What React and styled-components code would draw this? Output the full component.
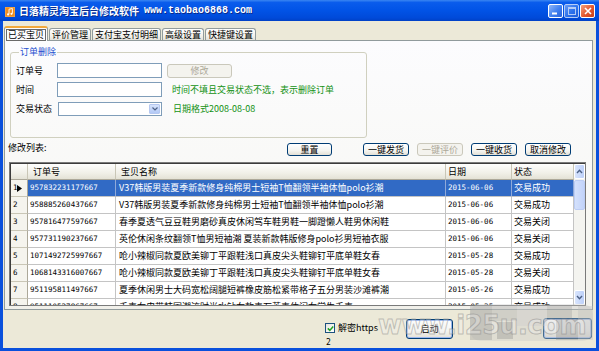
import React from 'react';
import styled, { createGlobalStyle } from 'styled-components';

const GlobalStyle = createGlobalStyle`
  html, body { margin: 0; padding: 0; background: #fff; }
  body { font-family: "Noto Sans CJK SC", "Liberation Sans", sans-serif; font-size: 9px; color: #000; }
  * { box-sizing: border-box; }
`;

const Window = styled.div`
  position: relative;
  width: 599px;
  height: 351px;
  display: flex;
  flex-direction: column;
  background: #0a50dc;
  overflow: hidden;
`;

const TitleBar = styled.div`
  height: 21px;
  flex: none;
  display: flex;
  align-items: center;
  padding: 1px 4px 0 5px;
  background: linear-gradient(#3a86f2 0%, #0a5cec 12%, #0153e6 50%, #004ad9 85%, #0040c6 100%);
  color: #fff;
`;

const AppIcon = styled.svg`
  width: 10px;
  height: 10px;
  margin-top: 1px;
  flex: none;
`;

const Title = styled.span`
  margin-left: 4px;
  font-size: 10px;
  font-weight: bold;
  line-height: 12px;
  text-shadow: 1px 1px 0 #0a2a8a;
`;

const TitleUrl = styled.span`
  margin-left: 5px;
  font-family: "Liberation Mono", monospace;
  font-size: 10px;
  font-weight: bold;
  line-height: 12px;
  text-shadow: 1px 1px 0 #0a2a8a;
`;

const Controls = styled.div`
  margin-left: auto;
  display: flex;
  gap: 1px;
`;

const CtrlBtn = styled.div`
  width: 15px;
  height: 14px;
  border: 1px solid #fff;
  border-radius: 2px;
  display: flex;
  align-items: center;
  justify-content: center;
  background: ${p => p.$close
    ? 'linear-gradient(135deg, #f4a07c, #e3572e 55%, #c8401c)'
    : 'linear-gradient(135deg, #8fb6f8, #3f7ff0 55%, #2a62d8)'};
  opacity: ${p => (p.$faded ? 0.7 : 1)};
`;

const Client = styled.div`
  flex: 1;
  margin: 0 3px 4px 3px;
  padding: 5px 3px 0 1px;
  background: #ece9d8;
  display: flex;
  flex-direction: column;
`;

const TabStrip = styled.div`
  height: 15px;
  flex: none;
  display: flex;
  align-items: flex-end;
  margin-bottom: -1px;
  position: relative;
  z-index: 2;
`;

const Tab = styled.div`
  height: ${p => (p.$active ? 15 : 12)}px;
  margin-bottom: ${p => (p.$active ? 0 : 1)}px;
  margin-right: 1px;
  padding: 0 2px;
  border: 1px solid #919b9c;
  border-bottom: none;
  border-top: ${p => (p.$active ? '2px solid #f3a93a' : '1px solid #919b9c')};
  border-radius: 3px 3px 0 0;
  background: ${p => (p.$active ? '#fcfcfe' : 'linear-gradient(#ffffff, #f3f2ec 60%, #e2e1d9)')};
  font-size: 9px;
  line-height: 11px;
  white-space: nowrap;
  display: flex;
  align-items: center;
`;

const FocusText = styled.span`
  outline: 1px solid #6a6a6a;
  padding: 0 1px;
  line-height: 10px;
`;

const TabPanel = styled.div`
  height: 270px;
  flex: none;
  border: 1px solid #919b9c;
  background: linear-gradient(#fcfcfe, #f7f7f3 70%, #f1f0ea);
  display: flex;
  flex-direction: column;
`;

const GroupBox = styled.fieldset`
  width: 357px;
  margin: 5px 0 0 5px;
  padding: 0 6px 21px 5px;
  border: 1px solid #d0d0bf;
  border-radius: 3px;
`;

const Legend = styled.legend`
  margin-left: 3px;
  padding: 0 1px;
  color: #1f4fd0;
  font-size: 9px;
  line-height: 12px;
`;

const FormGrid = styled.div`
  margin-top: 5px;
  display: grid;
  grid-template-columns: 41px 1fr;
  grid-auto-rows: 15px;
  row-gap: 4px;
  align-items: center;
`;

const FieldLabel = styled.span`
  font-size: 9px;
  line-height: 12px;
`;

const FieldLine = styled.div`
  display: flex;
  align-items: center;
  height: 15px;
`;

const TextBox = styled.input`
  width: 105px;
  height: 15px;
  margin: 0;
  padding: 0 2px;
  border: 1px solid #7f9db9;
  background: #fff;
  font: 9px "Noto Sans CJK SC", sans-serif;
  outline: none;
`;

const ComboBox = styled.div`
  width: 104px;
  height: 14px;
  margin-left: 1px;
  border: 1px solid #7f9db9;
  background: #fff;
  display: flex;
  justify-content: flex-end;
  padding: 1px;
`;

const ComboArrow = styled.div`
  width: 11px;
  height: 10px;
  border-radius: 1px;
  background: linear-gradient(#d6e3fc, #b3c9f6);
  border: 1px solid #b6c8f0;
  display: flex;
  align-items: center;
  justify-content: center;
`;

const Hint = styled.span`
  margin-left: ${p => p.$gap || 10}px;
  color: #139113;
  font-size: 9px;
  line-height: 12px;
  white-space: nowrap;
`;

const XpButton = styled.button`
  width: ${p => p.$w || 46}px;
  height: ${p => p.$h || 14}px;
  margin: ${p => p.$mt || 0}px 0 0 ${p => p.$ml || 0}px;
  padding: 0;
  flex: none;
  font: 9px "Noto Sans CJK SC", sans-serif;
  line-height: 10px;
  color: ${p => (p.disabled ? '#aca899' : '#000')};
  border: 1px solid ${p => (p.disabled ? '#cac8bb' : '#003c74')};
  border-radius: 3px;
  background: ${p => (p.disabled
    ? '#f4f3ee'
    : 'linear-gradient(#ffffff, #f4f4f0 60%, #e3e0d6)')};
  box-shadow: ${p => (p.$focus ? 'inset 0 0 0 1px #9cb8ee' : 'none')};
`;

const ListBar = styled.div`
  margin-top: 5px;
  height: 14px;
  display: flex;
  align-items: flex-start;
`;

const ListLabel = styled.span`
  width: 282px;
  padding-left: 3px;
  font-size: 9px;
  line-height: 9px;
  flex: none;
`;

const Grid = styled.div`
  margin: 5px 0 0 4px;
  width: 577px;
  height: 144px;
  border: 1px solid #7a7a7a;
  box-shadow: inset 1px 1px 0 #3c3c3c;
  padding: 1px 0 0 1px;
  display: flex;
  background: #fff;
  overflow: hidden;
`;

const Table = styled.div`
  flex: 1;
  display: grid;
  grid-template-columns: 17px 88px 330px 66px 62px;
  grid-template-rows: 16px;
  grid-auto-rows: 17px;
  align-content: start;
  overflow: hidden;
`;

const HeadCell = styled.div`
  padding-left: ${p => p.$pad ?? 4}px;
  background: linear-gradient(#fefefd, #f1f0e8 60%, #e4e2d6);
  border-right: 1px solid #c9c6b6;
  border-bottom: 1px solid #aca899;
  font-size: 9px;
  line-height: 15px;
  white-space: nowrap;
  overflow: hidden;
`;

const RowHead = styled.div`
  padding-left: 2px;
  background: #f5f4ee;
  border-right: 1px solid #aca899;
  border-bottom: 1px solid #c9c6b6;
  font-family: "DejaVu Sans Mono", monospace;
  font-size: 7.5px;
  line-height: 16px;
  display: flex;
  align-items: center;
`;

const RowMark = styled.svg`
  width: 5px;
  height: 7px;
  margin-left: -1px;
`;

const Cell = styled.div`
  padding-left: ${p => p.$pad ?? 2}px;
  background: ${p => (p.$sel ? '#316ac5' : '#fff')};
  color: ${p => (p.$sel ? '#fff' : '#000')};
  border-right: 1px solid ${p => (p.$sel ? '#8fa9d8' : '#c4c4c4')};
  border-bottom: 1px solid #c4c4c4;
  font-family: ${p => (p.$mono ? '"DejaVu Sans Mono", monospace' : '"Noto Sans CJK SC", sans-serif')};
  font-size: ${p => (p.$mono ? 7.5 : 9)}px;
  line-height: 16px;
  white-space: nowrap;
  overflow: hidden;
`;

const ScrollBar = styled.div`
  width: 11px;
  flex: none;
  display: flex;
  flex-direction: column;
  background: #f4f4f0;
`;

const ScrollBtn = styled.div`
  height: 15px;
  flex: none;
  border: 1px solid #fff;
  border-radius: 2px;
  background: linear-gradient(90deg, #d9e5fd, #bdd0f9);
  display: flex;
  align-items: center;
  justify-content: center;
`;

const Thumb = styled.div`
  height: 30px;
  margin: 1px 0;
  border: 1px solid #bccdf4;
  border-radius: 2px;
  background: linear-gradient(90deg, #d4e1fc, #c2d3fa);
`;

const Track = styled.div`
  flex: 1;
`;

const BottomBar = styled.div`
  flex: 1;
  display: flex;
  align-items: flex-start;
  padding: 0 1px 0 321px;
`;

const CheckCol = styled.div`
  width: 81px;
  flex: none;
  padding-top: 13px;
  display: flex;
  flex-direction: column;
  gap: 5px;
`;

const CheckRow = styled.label`
  display: flex;
  align-items: center;
  gap: 3px;
  height: 10px;
  font-size: 9px;
  line-height: 10px;
`;

const CheckBox = styled.span`
  width: 10px;
  height: 10px;
  border: 1px solid #1c5180;
  background: linear-gradient(135deg, #e6e6df, #fff);
  display: flex;
  align-items: center;
  justify-content: center;
`;

const Counter = styled.span`
  padding-left: 1px;
  font-family: "DejaVu Sans Mono", monospace;
  font-size: 8px;
  line-height: 10px;
`;

const Spacer = styled.div`
  flex: 1;
`;

const Watermark = styled.svg`
  position: absolute;
  left: 370px;
  top: 303px;
  width: 229px;
  height: 44px;
  pointer-events: none;
`;

const rows = [
  ['957832231177667', 'V37韩版男装夏季新款修身纯棉男士短袖T恤翻领半袖体恤polo衫潮', '2015-06-06', '交易成功'],
  ['958885260437667', 'V37韩版男装夏季新款修身纯棉男士短袖T恤翻领半袖体恤polo衫潮', '2015-06-06', '交易成功'],
  ['957816477597667', '春季夏透气豆豆鞋男磨砂真皮休闲驾车鞋男鞋一脚蹬懒人鞋男休闲鞋', '2015-06-06', '交易关闭'],
  ['957731190237667', '英伦休闲条纹翻领T恤男短袖潮 夏装新款韩版修身polo衫男短袖衣服', '2015-06-06', '交易关闭'],
  ['1071492725997667', '呛小辣椒同款夏欧美铆丁平跟鞋浅口真皮尖头鞋铆钉平底单鞋女春', '2015-05-28', '交易成功'],
  ['1068143316007667', '呛小辣椒同款夏欧美铆丁平跟鞋浅口真皮尖头鞋铆钉平底单鞋女春', '2015-05-28', '交易关闭'],
  ['951195811497667', '夏季休闲男士大码宽松阔腿短裤橡皮筋松紧带格子五分男装沙滩裤潮', '2015-05-26', '交易成功'],
  ['951110527867667', '手表女皮带韩国潮流时尚水钻女款表石英表休闲女学生手表', '2015-05-25', '交易成功'],
];

const tabs = ['已买宝贝', '评价管理', '支付宝支付明细', '高级设置', '快捷键设置'];

export default function App() {
  return (
    <>
      <GlobalStyle />
      <Window>
        <TitleBar>
          <AppIcon viewBox="0 0 10 10">
            <rect x="0" y="0" width="10" height="10" rx="1" fill="#f08c1e" stroke="#fbd08a" strokeWidth="0.6" />
            <path d="M4 2.2 L7.4 1.5 V6.6" stroke="#fff" strokeWidth="0.9" fill="none" />
            <path d="M4 2.2 V7.2" stroke="#fff" strokeWidth="0.9" />
            <circle cx="3.1" cy="7.4" r="1.1" fill="#fff" />
            <circle cx="6.5" cy="6.8" r="1.1" fill="#fff" />
          </AppIcon>
          <Title>日落精灵淘宝后台修改软件</Title>
          <TitleUrl>www.taobao6868.com</TitleUrl>
          <Controls>
            <CtrlBtn>
              <svg width="7" height="8" viewBox="0 0 7 8"><rect x="0" y="5.5" width="5" height="2" fill="#fff" /></svg>
            </CtrlBtn>
            <CtrlBtn $faded>
              <svg width="8" height="8" viewBox="0 0 8 8"><rect x="0.5" y="0.5" width="7" height="7" fill="none" stroke="#fff" /><rect x="0.5" y="0.5" width="7" height="1.5" fill="#fff" /></svg>
            </CtrlBtn>
            <CtrlBtn $close>
              <svg width="8" height="8" viewBox="0 0 8 8"><path d="M1 1 L7 7 M7 1 L1 7" stroke="#fff" strokeWidth="1.6" /></svg>
            </CtrlBtn>
          </Controls>
        </TitleBar>

        <Client>
          <TabStrip>
            {tabs.map((t, i) => (
              <Tab key={t} $active={i === 0}>
                {i === 0 ? <FocusText>{t}</FocusText> : t}
              </Tab>
            ))}
          </TabStrip>

          <TabPanel>
            <GroupBox>
              <Legend>订单删除</Legend>
              <FormGrid>
                <FieldLabel>订单号</FieldLabel>
                <FieldLine>
                  <TextBox readOnly value="" />
                  <XpButton disabled $w={65} $ml={5}>修改</XpButton>
                </FieldLine>
                <FieldLabel>时间</FieldLabel>
                <FieldLine>
                  <TextBox readOnly value="" />
                  <Hint $gap={10}>时间不填且交易状态不选，表示删除订单</Hint>
                </FieldLine>
                <FieldLabel>交易状态</FieldLabel>
                <FieldLine>
                  <ComboBox>
                    <ComboArrow>
                      <svg width="6" height="4" viewBox="0 0 6 4"><path d="M0.5 0.5 L3 3 L5.5 0.5" stroke="#4d6185" strokeWidth="1.2" fill="none" /></svg>
                    </ComboArrow>
                  </ComboBox>
                  <Hint $gap={11}>日期格式2008-08-08</Hint>
                </FieldLine>
              </FormGrid>
            </GroupBox>

            <ListBar>
              <ListLabel>修改列表:</ListLabel>
              <XpButton $w={45} $h={13}>重置</XpButton>
              <XpButton $w={46} $h={13} $ml={31}>一键发货</XpButton>
              <XpButton $w={46} $h={13} $ml={8} disabled>一键评价</XpButton>
              <XpButton $w={46} $h={13} $ml={8}>一键收货</XpButton>
              <XpButton $w={46} $h={13} $ml={8}>取消修改</XpButton>
            </ListBar>

            <Grid>
              <Table>
                <HeadCell $pad={0} />
                <HeadCell $pad={5}>订单号</HeadCell>
                <HeadCell $pad={5}>宝贝名称</HeadCell>
                <HeadCell $pad={2}>日期</HeadCell>
                <HeadCell $pad={2}>状态</HeadCell>
                {rows.map((r, i) => (
                  <React.Fragment key={r[0]}>
                    <RowHead>
                      {i + 1}
                      {i === 0 && (
                        <RowMark viewBox="0 0 5 7">
                          <path d="M0 0 L5 3.5 L0 7 Z" fill="#000" />
                        </RowMark>
                      )}
                    </RowHead>
                    <Cell $sel={i === 0} $mono>{r[0]}</Cell>
                    <Cell $sel={i === 0} $pad={3}>{r[1]}</Cell>
                    <Cell $sel={i === 0} $mono>{r[2]}</Cell>
                    <Cell $sel={i === 0}>{r[3]}</Cell>
                  </React.Fragment>
                ))}
              </Table>
              <ScrollBar>
                <ScrollBtn>
                  <svg width="7" height="5" viewBox="0 0 7 5"><path d="M1 4 L3.5 1.3 L6 4" stroke="#4d6185" strokeWidth="1.4" fill="none" /></svg>
                </ScrollBtn>
                <Thumb />
                <Track />
                <ScrollBtn>
                  <svg width="7" height="5" viewBox="0 0 7 5"><path d="M1 1 L3.5 3.7 L6 1" stroke="#4d6185" strokeWidth="1.4" fill="none" /></svg>
                </ScrollBtn>
              </ScrollBar>
            </Grid>
          </TabPanel>

          <BottomBar>
            <CheckCol>
              <CheckRow>
                <CheckBox>
                  <svg width="7" height="7" viewBox="0 0 7 7"><path d="M0.8 3.4 L2.8 5.4 L6.2 1.4" stroke="#21a121" strokeWidth="1.5" fill="none" /></svg>
                </CheckBox>
                解密https
              </CheckRow>
              <Counter>2</Counter>
            </CheckCol>
            <XpButton $w={47} $h={20} $mt={9} $focus>启动</XpButton>
            <Spacer />
            <XpButton $w={49} $h={21} $mt={8} $focus />
          </BottomBar>
        </Client>

        <Watermark viewBox="0 0 229 44">
          <rect x="100" y="1" width="123" height="37" rx="10" fill="rgba(200,200,200,0.35)" />
          <rect x="100" y="3" width="22" height="34" fill="rgba(150,150,150,0.35)" />
          <rect x="122" y="3" width="25" height="15" fill="rgba(180,180,180,0.35)" />
          <rect x="127" y="19" width="16" height="17" fill="rgba(130,130,130,0.3)" />
          <rect x="147" y="3" width="30" height="20" fill="rgba(205,205,205,0.4)" />
          <rect x="177" y="3" width="25" height="12" fill="rgba(160,160,160,0.35)" />
          <rect x="186" y="16" width="22" height="21" fill="rgba(125,125,125,0.3)" />
          <rect x="208" y="3" width="15" height="34" fill="rgba(190,190,190,0.35)" />
          <text x="8" y="31" fontFamily="DejaVu Sans, sans-serif" fontWeight="bold" fontSize="26" letterSpacing="-0.5"
            fill="rgba(245,245,245,0.3)" stroke="rgba(130,130,130,0.45)" strokeWidth="1">www.i25u.com</text>
        </Watermark>
      </Window>
    </>
  );
}
